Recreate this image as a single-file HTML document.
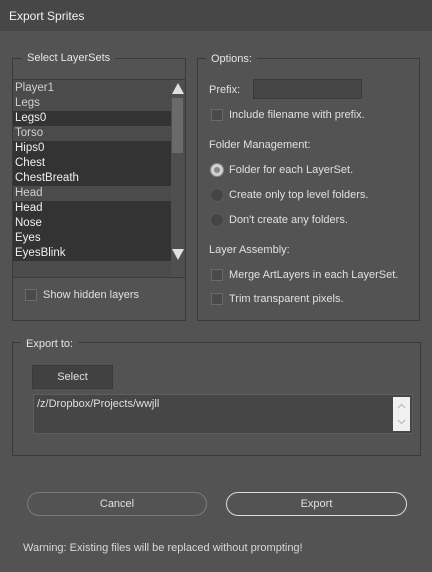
<!DOCTYPE html><html><head><style>
body{margin:0;width:432px;height:572px;background:#535353;font-family:"Liberation Sans",sans-serif;font-size:11px;color:#e0e0e0;position:relative;overflow:hidden}
div,span{position:absolute;box-sizing:border-box}
.t{white-space:nowrap;line-height:14px}
.box{border:1px solid #3a3a3a}
.lbl{background:#535353;padding:0 5px;color:#e6e6e6}
.cb{width:12px;height:12px;border:1px solid #6a6a6a;background:#4a4a4a}
.rd{width:14px;height:14px;border-radius:50%;border:1px solid #5a5a5a;background:#454545}
.row{left:0;width:158px;height:15px;padding-left:2px;line-height:15px;font-size:11.5px}
.d{background:#333;color:#f0f0f0}.l{background:#4b4b4b;color:#d0d0d0}
</style></head><body>
<div style="left:0;top:0;width:432px;height:31px;background:#474747"></div>
<div class="t" style="left:9px;top:9px;color:#f2f2f2;font-size:12px">Export Sprites</div>

<div class="box" style="left:12px;top:58px;width:174px;height:263px"></div>
<div class="t lbl" style="left:22px;top:51px">Select LayerSets</div>
<div style="left:13px;top:79px;width:172px;height:199px;background:#4b4b4b;border-top:1px solid #3a3a3a;border-bottom:1px solid #3a3a3a">
<div class="row l" style="top:1px">Player1</div>
<div class="row l" style="top:16px">Legs</div>
<div class="row d" style="top:31px">Legs0</div>
<div class="row l" style="top:46px">Torso</div>
<div class="row d" style="top:61px">Hips0</div>
<div class="row d" style="top:76px">Chest</div>
<div class="row d" style="top:91px">ChestBreath</div>
<div class="row l" style="top:106px">Head</div>
<div class="row d" style="top:121px">Head</div>
<div class="row d" style="top:136px">Nose</div>
<div class="row d" style="top:151px">Eyes</div>
<div class="row d" style="top:166px">EyesBlink</div>
<div style="left:158px;top:0;width:13px;height:197px;background:#4f4f4f"></div>
<div style="left:159px;top:18px;width:11px;height:55px;background:#6a6a6a"></div>
<div style="left:159px;top:3px;width:0;height:0;border-left:6px solid transparent;border-right:6px solid transparent;border-bottom:11px solid #e0e0e0"></div>
<div style="left:159px;top:169px;width:0;height:0;border-left:6px solid transparent;border-right:6px solid transparent;border-top:11px solid #e0e0e0"></div>
</div>
<div class="cb" style="left:25px;top:289px"></div>
<div class="t" style="left:43px;top:288px">Show hidden layers</div>

<div class="box" style="left:197px;top:58px;width:223px;height:263px"></div>
<div class="t lbl" style="left:206px;top:52px">Options:</div>
<div class="t" style="left:209px;top:83px">Prefix:</div>
<div style="left:253px;top:79px;width:109px;height:20px;background:#464646;border:1px solid #3a3a3a"></div>
<div class="cb" style="left:211px;top:109px"></div>
<div class="t" style="left:229px;top:108px">Include filename with prefix.</div>
<div class="t" style="left:209px;top:138px">Folder Management:</div>
<div class="rd" style="left:210px;top:163px;background:#d0d0d0;border-color:#888"><div style="left:3px;top:3px;width:6px;height:6px;border-radius:50%;background:#888"></div></div>
<div class="t" style="left:229px;top:163px">Folder for each LayerSet.</div>
<div class="rd" style="left:210px;top:188px"></div>
<div class="t" style="left:229px;top:188px">Create only top level folders.</div>
<div class="rd" style="left:210px;top:213px"></div>
<div class="t" style="left:229px;top:213px">Don't create any folders.</div>
<div class="t" style="left:209px;top:243px">Layer Assembly:</div>
<div class="cb" style="left:211px;top:269px"></div>
<div class="t" style="left:229px;top:268px">Merge ArtLayers in each LayerSet.</div>
<div class="cb" style="left:211px;top:293px"></div>
<div class="t" style="left:229px;top:292px">Trim transparent pixels.</div>

<div class="box" style="left:12px;top:342px;width:409px;height:114px"></div>
<div class="t lbl" style="left:21px;top:337px">Export to:</div>
<div style="left:32px;top:365px;width:81px;height:24px;background:#414141;border:1px solid #3a3a3a;text-align:center;line-height:22px">Select</div>
<div style="left:33px;top:394px;width:380px;height:40px;background:#464646;border:1px solid #5e5e5e"></div>
<div class="t" style="left:37px;top:397px">/z/Dropbox/Projects/wwjll</div>
<div style="left:393px;top:397px;width:17px;height:34px;background:#f0f0f0"></div>
<svg style="position:absolute;left:393px;top:397px" width="17" height="34"><path d="M5 11l3.5-3.5L12 11M5 23l3.5 3.5L12 23" fill="none" stroke="#bbb" stroke-width="1.2"/></svg>

<div style="left:27px;top:492px;width:180px;height:24px;border:1px solid #7a7a7a;border-radius:12px;text-align:center;line-height:22px">Cancel</div>
<div style="left:226px;top:492px;width:181px;height:24px;border:1px solid #dcdcdc;border-radius:12px;text-align:center;line-height:22px">Export</div>
<div class="t" style="left:23px;top:541px;color:#d8d8d8">Warning: Existing files will be replaced without prompting!</div>
</body></html>
